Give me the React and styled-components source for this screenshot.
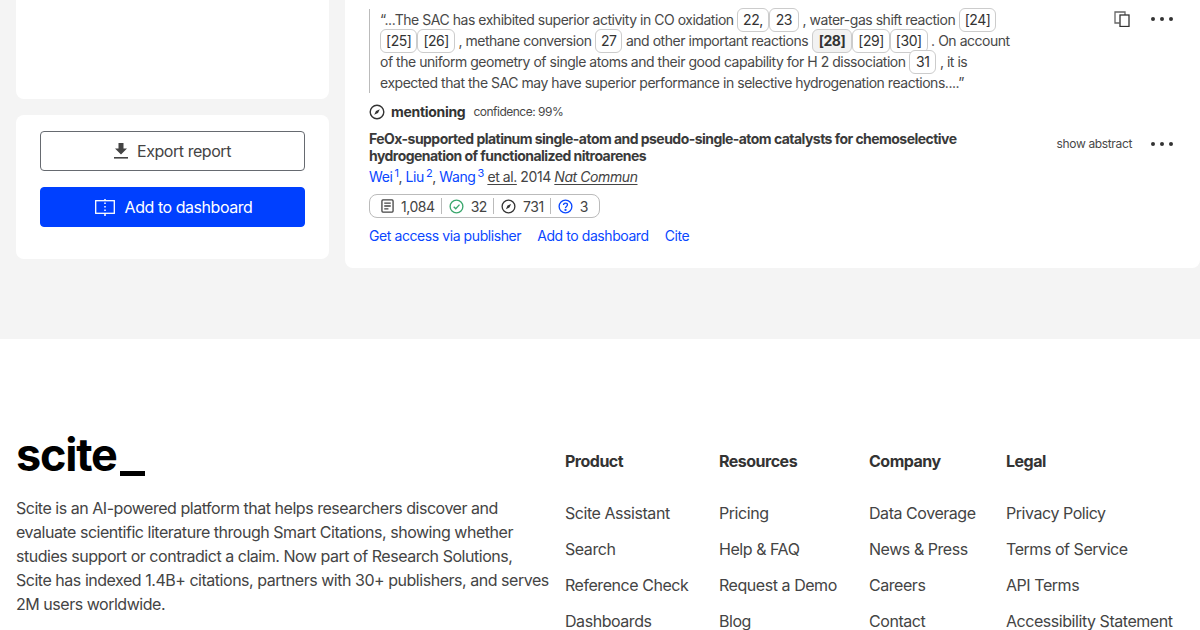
import React from "react"
import styled, { createGlobalStyle } from "styled-components"

const GlobalStyle = createGlobalStyle`
  html, body {
    margin: 0;
    padding: 0;
    height: 630px;
    overflow: hidden;
    background: #fff;
    font-family: Inter, "Liberation Sans", sans-serif;
    color: #444;
  }
  * { box-sizing: border-box; }
`

const blue = "#0a47ff"

const Top = styled.section`
  height: 339px;
  background: #f4f4f4;
  padding: 0 0 0 16px;
  display: grid;
  grid-template-columns: 313px 855px;
  column-gap: 16px;
  align-items: start;
`
const Sidebar = styled.aside`
  display: flex;
  flex-direction: column;
  gap: 16px;
`
const BlankCard = styled.div`
  height: 99px;
  background: #fff;
  border-radius: 0 0 8px 8px;
`
const ActionsCard = styled.div`
  background: #fff;
  border-radius: 8px;
  padding: 16px 24px 32px;
  display: flex;
  flex-direction: column;
  gap: 16px;
`
const Button = styled.button`
  height: 40px;
  width: 100%;
  padding: 0 0 0 ${p => (p.$primary ? "2px" : "0")};
  border-radius: 4px;
  border: 1px solid ${p => (p.$primary ? "#0040ff" : "#666a70")};
  background: ${p => (p.$primary ? "#0040ff" : "#fff")};
  color: ${p => (p.$primary ? "#fff" : "#444")};
  font: 400 16px Inter, "Liberation Sans", sans-serif;
  letter-spacing: -0.45px;
  display: flex;
  align-items: center;
  justify-content: center;
  gap: ${p => (p.$primary ? "10px" : "9px")};
`
const ResultCard = styled.article`
  height: 268px;
  background: #fff;
  border-radius: 0 0 8px 8px;
  padding: 9px 0 0 24px;
  position: relative;
`
const Quote = styled.blockquote`
  margin: 0;
  border-left: 1px solid #bbb;
  padding-left: 10px;
  font-size: 14px;
  line-height: 21px;
  height: 84px;
  white-space: nowrap;
  letter-spacing: -0.47px;
  color: #484848;
`
const Chip = styled.span`
  display: inline-block;
  border: 1px solid #ccc;
  border-radius: 6px;
  height: 24px;
  line-height: 21px;
  padding: 0 ${p => p.$pad || 5}px;
  margin: -2px 0;
  color: #333;
  background: ${p => (p.$active ? "#f2f2f2" : "#fff")};
  font-weight: ${p => (p.$active ? 700 : 400)};
`
const ToolIcons = styled.div`
  position: absolute;
  top: 11px;
  right: 27px;
  display: flex;
  align-items: center;
  gap: 21px;
`
const Dots = styled.span`
  display: inline-flex;
  gap: 5px;
  i {
    width: 4px;
    height: 4px;
    border-radius: 50%;
    background: #333;
  }
`
const Tally = styled.div`
  display: flex;
  align-items: center;
  margin-top: 10px;
  height: 17px;
  gap: 6px;
`
const TallyLabel = styled.strong`
  font-size: 14px;
  color: #333;
  font-weight: 700;
  letter-spacing: -0.3px;
  margin-right: 2px;
`
const Confidence = styled.span`
  font-size: 12px;
  color: #484848;
  letter-spacing: -0.5px;
`
const PaperHead = styled.div`
  margin-top: 10px;
  display: flex;
  justify-content: space-between;
  align-items: flex-start;
  padding-right: 27px;
`
const PaperTitle = styled.h3`
  margin: 0;
  font-size: 14px;
  line-height: 17px;
  font-weight: 700;
  color: #3a3a3a;
  letter-spacing: -0.54px;
  white-space: nowrap;
`
const AbstractRow = styled.div`
  display: flex;
  align-items: center;
  gap: 19px;
  height: 17px;
  margin-top: 5px;
`
const ShowAbstract = styled.span`
  font-size: 12px;
  color: #484848;
  letter-spacing: -0.35px;
`
const Authors = styled.div`
  margin-top: 4px;
  font-size: 14px;
  line-height: 17px;
  height: 17px;
  color: #444;
  letter-spacing: -0.42px;
  white-space: nowrap;
  sup { font-size: 11px; line-height: 0; margin-left: 2px; vertical-align: 5px; }
  u { text-underline-offset: 2px; }
`
const A = styled.a`
  color: ${blue};
  text-decoration: none;
`
const Counts = styled.div`
  margin-top: 9px;
  display: inline-flex;
  align-items: center;
  height: 24px;
  border: 1px solid #bbb;
  border-radius: 8px;
  padding: 0 11px;
  font-size: 14px;
  color: #444;
  letter-spacing: -0.45px;
`
const Count = styled.span`
  display: flex;
  align-items: center;
  gap: 7px;
  padding: 0 6px 0 7px;
  height: 16px;
  border-left: 1px solid #bbb;
  ${p => p.$first && "border-left: 0; padding-left: 0;"}
  &:last-child { padding-right: 0; }
`
const Links = styled.div`
  margin-top: 9px;
  display: flex;
  gap: 16px;
  font-size: 14px;
  line-height: 17px;
  letter-spacing: -0.42px;
`
const Footer = styled.footer`
  background: #fff;
  padding: 96px 0 0 16px;
  display: grid;
  grid-template-columns: 549px 154px 150px 137px auto;
`
const Brand = styled.div`
  width: 532px;
`
const Logo = styled.div`
  display: flex;
  align-items: baseline;
  gap: 3px;
  font-size: 45px;
  line-height: 40px;
  height: 40px;
  font-weight: 700;
  color: #000;
  letter-spacing: -1.2px;
  &::after {
    content: "";
    width: 25px;
    height: 5px;
    background: #000;
    position: relative;
    top: 5px;
  }
`
const Blurb = styled.p`
  margin: 21px 0 0;
  font-size: 16px;
  line-height: 24px;
  color: #444;
  letter-spacing: -0.47px;
  white-space: nowrap;
`
const Col = styled.nav`
  display: flex;
  flex-direction: column;
  gap: 16px;
  padding-top: 16px;
  font-size: 16px;
  line-height: 20px;
  color: #444;
  letter-spacing: -0.45px;
  white-space: nowrap;
`
const ColTitle = styled.strong`
  font-weight: 700;
  color: #333;
  margin-bottom: 16px;
  letter-spacing: -0.5px;
`

const CopyIcon = () => (
  <svg width="16" height="16" viewBox="0 0 16 16" fill="none" strokeWidth="1.300">
    <path d="M5.500 12H1V1h10v3" stroke="#666" />
    <rect x="6" y="4" width="9" height="11.500" stroke="#333" />
  </svg>
)
const ThreeDots = () => (
  <Dots><i /><i /><i /></Dots>
)
const DownloadIcon = () => (
  <svg width="14" height="16" viewBox="0 0 14 16" fill="#444">
    <path d="M4.500 0h5v5.500H13L7 11.500 1 5.500h3.500z" />
    <rect y="14" width="14" height="1.600" />
  </svg>
)
const BookIcon = () => (
  <svg width="20" height="17" viewBox="0 0 20 17" fill="none" stroke="#fff" strokeWidth="1.300">
    <rect x="0.700" y="1.700" width="18.600" height="12.600" />
    <path d="M10 0v1.500M10 3.500v1.500M10 7v1.500M10 10.500v1.500M10 14v3" strokeWidth="1.500" />
  </svg>
)
const MentionIcon = ({ size = 16, color = "#333" }) => (
  <svg width={size} height={size} viewBox="0 0 16 16" fill="none" stroke={color} strokeWidth="1.400">
    <circle cx="8" cy="8" r="6.800" />
    <path d="M5.200 10.800 7 7l3.800-1.800L9 9z" fill={color} stroke="none" />
  </svg>
)
const CheckIcon = () => (
  <svg width="15" height="15" viewBox="0 0 16 16" fill="none" stroke="#3aa76d" strokeWidth="1.400">
    <circle cx="8" cy="8" r="6.800" />
    <path d="M5 8.200l2.200 2.200L11.200 6" />
  </svg>
)
const QuestionIcon = () => (
  <svg width="15" height="15" viewBox="0 0 16 16" fill="none" stroke={blue} strokeWidth="1.400">
    <circle cx="8" cy="8" r="6.800" />
    <path d="M5.900 6.300C5.900 5 6.900 4.300 8 4.300s2.100.7 2.100 1.900c0 1.700-2.100 1.700-2.100 3.400" />
    <circle cx="8" cy="11.700" r=".5" fill={blue} />
  </svg>
)
const DocIcon = () => (
  <svg width="13" height="14" viewBox="0 0 14 15" fill="none" stroke="#444" strokeWidth="1.400">
    <rect x="1" y="1" width="12" height="13" rx="1" />
    <path d="M3.500 4.500h7M3.500 7.500h7M3.500 10.500h4.500" />
  </svg>
)

const footerCols = [
  ["Product", ["Scite Assistant", "Search", "Reference Check", "Dashboards"]],
  ["Resources", ["Pricing", "Help & FAQ", "Request a Demo", "Blog"]],
  ["Company", ["Data Coverage", "News & Press", "Careers", "Contact"]],
  ["Legal", ["Privacy Policy", "Terms of Service", "API Terms", "Accessibility Statement"]],
]

export default function App() {
  return (
    <>
      <GlobalStyle />
      <Top>
        <Sidebar>
          <BlankCard />
          <ActionsCard>
            <Button><DownloadIcon />Export report</Button>
            <Button $primary><BookIcon />Add to dashboard</Button>
          </ActionsCard>
        </Sidebar>
        <ResultCard>
          <ToolIcons>
            <CopyIcon />
            <ThreeDots />
          </ToolIcons>
          <Quote>
            “...The SAC has exhibited superior activity in CO oxidation <Chip>22,</Chip><Chip $pad={6}>23</Chip> , water-gas shift reaction <Chip>[24]</Chip><br />
            <Chip>[25]</Chip><Chip>[26]</Chip> , methane conversion <Chip>27</Chip> and other important reactions <Chip $active $pad={6}>[28]</Chip><Chip>[29]</Chip><Chip>[30]</Chip> . On account<br />
            of the uniform geometry of single atoms and their good capability for H 2 dissociation <Chip $pad={6}>31</Chip> , it is<br />
            expected that the SAC may have superior performance in selective hydrogenation reactions....”
          </Quote>
          <Tally>
            <MentionIcon />
            <TallyLabel>mentioning</TallyLabel>
            <Confidence>confidence: 99%</Confidence>
          </Tally>
          <PaperHead>
            <PaperTitle>
              FeOx-supported platinum single-atom and pseudo-single-atom catalysts for chemoselective<br />
              hydrogenation of functionalized nitroarenes
            </PaperTitle>
            <AbstractRow>
              <ShowAbstract>show abstract</ShowAbstract>
              <ThreeDots />
            </AbstractRow>
          </PaperHead>
          <Authors>
            <A href="#">Wei<sup>1</sup></A>, <A href="#">Liu<sup>2</sup></A>, <A href="#">Wang<sup>3</sup></A> <u>et al.</u> 2014 <u><em>Nat Commun</em></u>
          </Authors>
          <Counts>
            <Count $first><DocIcon />1,084</Count>
            <Count><CheckIcon />32</Count>
            <Count><MentionIcon size={15} />731</Count>
            <Count><QuestionIcon />3</Count>
          </Counts>
          <Links>
            <A href="#">Get access via publisher</A>
            <A href="#">Add to dashboard</A>
            <A href="#">Cite</A>
          </Links>
        </ResultCard>
      </Top>
      <Footer>
        <Brand>
          <Logo>scite</Logo>
          <Blurb>
            Scite is an AI-powered platform that helps researchers discover and<br />
            evaluate scientific literature through Smart Citations, showing whether<br />
            studies support or contradict a claim. Now part of Research Solutions,<br />
            Scite has indexed 1.4B+ citations, partners with 30+ publishers, and serves<br />
            2M users worldwide.
          </Blurb>
        </Brand>
        {footerCols.map(([title, items]) => (
          <Col key={title}>
            <ColTitle>{title}</ColTitle>
            {items.map(item => <span key={item}>{item}</span>)}
          </Col>
        ))}
      </Footer>
    </>
  )
}
